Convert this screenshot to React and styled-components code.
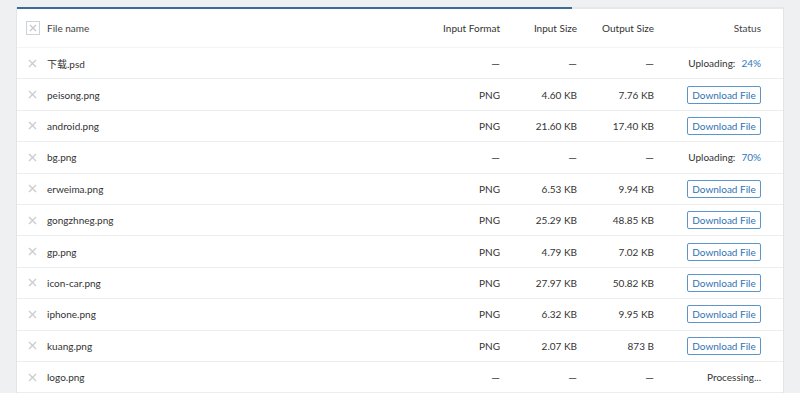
import React from 'react';
import styled, { createGlobalStyle } from 'styled-components';

const GlobalStyle = createGlobalStyle`
  html, body {
    margin: 0;
    padding: 0;
    background: #eff0f2;
    font-family: Lato, "Noto Sans CJK SC", sans-serif;
    color: #333;
  }
`;

const Page = styled.div`
  padding: 7px 16px 0 16px;
  height: 393px;
  box-sizing: border-box;
  overflow: hidden;
`;

const Card = styled.div`
  background: #fff;
  border-left: 1px solid #e2e4e7;
  border-right: 1px solid #e2e4e7;
`;

const Progress = styled.div`
  height: 2px;
  background: #e6e8eb;
`;

const ProgressFill = styled.div`
  height: 100%;
  background: #3b6c98;
`;

const Row = styled.div`
  display: grid;
  grid-template-columns: 30px 1fr 70px 77px 77px 107px;
  padding-right: 22px;
  align-items: center;
  height: ${(p) => (p.$head ? '39px' : '31.4px')};
  box-sizing: border-box;
  border-bottom: 1px solid ${(p) => (p.$head ? '#f3f4f5' : '#ebedef')};
  font-size: 10px;
  color: ${(p) => (p.$head ? '#444' : '#333')};
`;

const IconCell = styled.div`
  display: flex;
  justify-content: center;
  padding-left: 1px;
`;

const NameCell = styled.div`
  font-size: 10px;
`;

const NumCell = styled.div`
  text-align: right;
  color: ${(p) => (p.$dash ? '#444' : '#333')};
  font-size: ${(p) => (p.$dash ? '11px' : '10px')};
`;

const StatusCell = styled.div`
  text-align: right;
  display: flex;
  justify-content: flex-end;
  align-items: center;
`;

const Percent = styled.span`
  color: #2f78bd;
  margin-left: 6px;
`;

const DownloadButton = styled.button`
  font-family: inherit;
  font-size: 10px;
  color: #2f72b3;
  background: #fff;
  border: 1px solid #5c95c9;
  border-radius: 2px;
  height: 18px;
  width: 74px;
  padding: 0;
  cursor: pointer;
`;

const HeaderBox = () => (
  <svg width="14" height="14" viewBox="0 0 14 14">
    <rect x="0.5" y="0.5" width="13" height="13" fill="#fff" stroke="#cfd2d6" />
    <path d="M4 4 L10 10 M10 4 L4 10" stroke="#c4c7cb" strokeWidth="1.3" />
  </svg>
);

const Cross = () => (
  <svg width="9" height="9" viewBox="0 0 9 9">
    <path d="M1 1 L8 8 M8 1 L1 8" stroke="#c9ccd0" strokeWidth="1.4" />
  </svg>
);

const files = [
  { name: '下载.psd', status: { uploading: 24 } },
  { name: 'peisong.png', fmt: 'PNG', inSize: '4.60 KB', outSize: '7.76 KB' },
  { name: 'android.png', fmt: 'PNG', inSize: '21.60 KB', outSize: '17.40 KB' },
  { name: 'bg.png', status: { uploading: 70 } },
  { name: 'erweima.png', fmt: 'PNG', inSize: '6.53 KB', outSize: '9.94 KB' },
  { name: 'gongzhneg.png', fmt: 'PNG', inSize: '25.29 KB', outSize: '48.85 KB' },
  { name: 'gp.png', fmt: 'PNG', inSize: '4.79 KB', outSize: '7.02 KB' },
  { name: 'icon-car.png', fmt: 'PNG', inSize: '27.97 KB', outSize: '50.82 KB' },
  { name: 'iphone.png', fmt: 'PNG', inSize: '6.32 KB', outSize: '9.95 KB' },
  { name: 'kuang.png', fmt: 'PNG', inSize: '2.07 KB', outSize: '873 B' },
  { name: 'logo.png', status: { processing: true } },
];

function Status({ file }) {
  if (file.status && file.status.uploading != null) {
    return (
      <StatusCell>
        Uploading:<Percent>{file.status.uploading}%</Percent>
      </StatusCell>
    );
  }
  if (file.status && file.status.processing) {
    return <StatusCell>Processing...</StatusCell>;
  }
  return (
    <StatusCell>
      <DownloadButton>Download File</DownloadButton>
    </StatusCell>
  );
}

export default function App() {
  return (
    <>
      <GlobalStyle />
      <Page>
        <Card>
          <Progress>
            <ProgressFill style={{ width: '72.5%' }} />
          </Progress>
          <Row $head>
            <IconCell>
              <HeaderBox />
            </IconCell>
            <NameCell>File name</NameCell>
            <NumCell>Input Format</NumCell>
            <NumCell>Input Size</NumCell>
            <NumCell>Output Size</NumCell>
            <StatusCell>Status</StatusCell>
          </Row>
          {files.map((f) => (
            <Row key={f.name}>
              <IconCell>
                <Cross />
              </IconCell>
              <NameCell>{f.name}</NameCell>
              <NumCell $dash={!f.fmt}>{f.fmt || '—'}</NumCell>
              <NumCell $dash={!f.inSize}>{f.inSize || '—'}</NumCell>
              <NumCell $dash={!f.outSize}>{f.outSize || '—'}</NumCell>
              <Status file={f} />
            </Row>
          ))}
        </Card>
      </Page>
    </>
  );
}
